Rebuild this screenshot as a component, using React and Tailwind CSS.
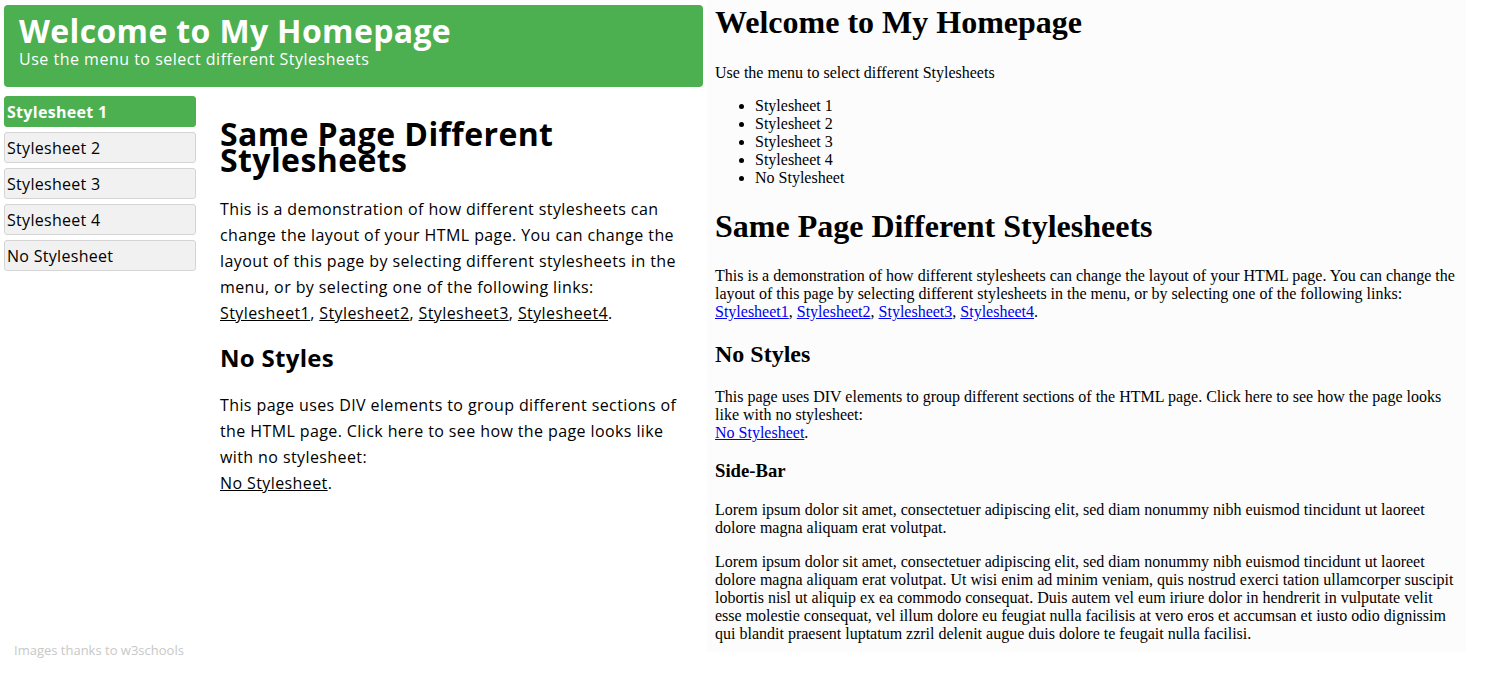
import React from "react";

// Two screenshots of the same page side by side: styled (left) and unstyled (right).

const menu = ["Stylesheet 1", "Stylesheet 2", "Stylesheet 3", "Stylesheet 4", "No Stylesheet"];

const lorem =
  "Lorem ipsum dolor sit amet, consectetuer adipiscing elit, sed diam nonummy nibh euismod tincidunt ut laoreet dolore magna aliquam erat volutpat.";
const loremLong =
  lorem +
  " Ut wisi enim ad minim veniam, quis nostrud exerci tation ullamcorper suscipit lobortis nisl ut aliquip ex ea commodo consequat. Duis autem vel eum iriure dolor in hendrerit in vulputate velit esse molestie consequat, vel illum dolore eu feugiat nulla facilisis at vero eros et accumsan et iusto odio dignissim qui blandit praesent luptatum zzril delenit augue duis dolore te feugait nulla facilisi.";

function StyledPage() {
  return (
    <div className="flex h-full w-[707px] shrink-0 flex-col font-['Open_Sans',sans-serif] text-black">
      <header className="mx-[4px] mt-[5px] h-[82px] rounded-[4px] bg-[#4CAF50] px-[15px] pt-[9px] text-white">
        <h1 className="text-[32px] font-bold leading-[34px] tracking-[0.35px]">Welcome to My Homepage</h1>
        <p className="mt-[2px] text-[16px] leading-[18px] tracking-[0.5px]">
          Use the menu to select different Stylesheets
        </p>
      </header>

      <div className="mt-[9px] flex">
        <nav className="ml-[4px] flex w-[192px] shrink-0 flex-col gap-[5px]">
          {menu.map((label, i) =>
            i === 0 ? (
              <div
                key={label}
                className="flex h-[31px] items-center rounded-[3px] border border-[#4CAF50] bg-[#4CAF50] px-[2px] text-[16px] font-bold tracking-[0.3px] text-white"
              >
                {label}
              </div>
            ) : (
              <div
                key={label}
                className="flex h-[31px] items-center rounded-[3px] border border-[#d4d4d4] bg-[#f1f1f1] px-[2px] text-[16px] tracking-[0.3px] text-black"
              >
                {label}
              </div>
            )
          )}
        </nav>

        <main className="ml-[24px] w-[465px] pt-[25px]">
          <h1 className="text-[32px] font-bold leading-[26px] tracking-[0.4px]">Same Page Different Stylesheets</h1>
          <p className="mt-[23px] text-[16px] leading-[26px] tracking-[0.4px]">
            This is a demonstration of how different stylesheets can change the layout of your HTML page. You can
            change the layout of this page by selecting different stylesheets in the menu, or by selecting one of the
            following links:
            <br />
            <a className="underline">Stylesheet1</a>, <a className="underline">Stylesheet2</a>,{" "}
            <a className="underline">Stylesheet3</a>, <a className="underline">Stylesheet4</a>.
          </p>
          <h2 className="mt-[17px] text-[24px] font-bold leading-[30px] tracking-[0.3px]">No Styles</h2>
          <p className="mt-[19px] text-[16px] leading-[26px] tracking-[0.4px]">
            This page uses DIV elements to group different sections of the HTML page. Click here to see how the page
            looks like with no stylesheet:
            <br />
            <a className="underline">No Stylesheet</a>.
          </p>
        </main>
      </div>

      <p className="mt-auto pb-[18px] pl-[14px] text-[13px] leading-[18px] text-[#c8c8c8]">
        Images thanks to w3schools
      </p>
    </div>
  );
}

function PlainPage() {
  const link = "text-[#0000EE] underline";
  return (
    <div className="h-[652px] w-[759px] shrink-0 bg-[#fcfcfc] px-[8px] pt-[4px] font-['Liberation_Serif',serif] text-[16px] leading-[normal] text-black">
      <h1 className="text-[32px] font-bold leading-[normal]">Welcome to My Homepage</h1>
      <p className="mt-[23px]">Use the menu to select different Stylesheets</p>
      <ul className="my-[15px] list-disc pl-[40px]">
        {menu.map((label) => (
          <li key={label}>{label}</li>
        ))}
      </ul>
      <h1 className="mt-[21.44px] text-[32px] font-bold leading-[normal]">Same Page Different Stylesheets</h1>
      <p className="mt-[21.44px]">
        This is a demonstration of how different stylesheets can change the layout of your HTML page. You can change
        the layout of this page by selecting different stylesheets in the menu, or by selecting one of the following
        links:
        <br />
        <a className={link}>Stylesheet1</a>, <a className={link}>Stylesheet2</a>, <a className={link}>Stylesheet3</a>,{" "}
        <a className={link}>Stylesheet4</a>.
      </p>
      <h2 className="mt-[19.92px] text-[24px] font-bold leading-[normal]">No Styles</h2>
      <p className="mt-[20.5px]">
        This page uses DIV elements to group different sections of the HTML page. Click here to see how the page looks
        like with no stylesheet:
        <br />
        <a className={link}>No Stylesheet</a>.
      </p>
      <h3 className="mt-[17.5px] text-[18.72px] font-bold leading-[normal]">Side-Bar</h3>
      <p className="mt-[19.5px]">{lorem}</p>
      <p className="mt-[16px]">{loremLong}</p>
    </div>
  );
}

export default function App() {
  return (
    <div className="flex h-[677px] w-[1486px] overflow-hidden bg-white">
      <StyledPage />
      <PlainPage />
    </div>
  );
}
